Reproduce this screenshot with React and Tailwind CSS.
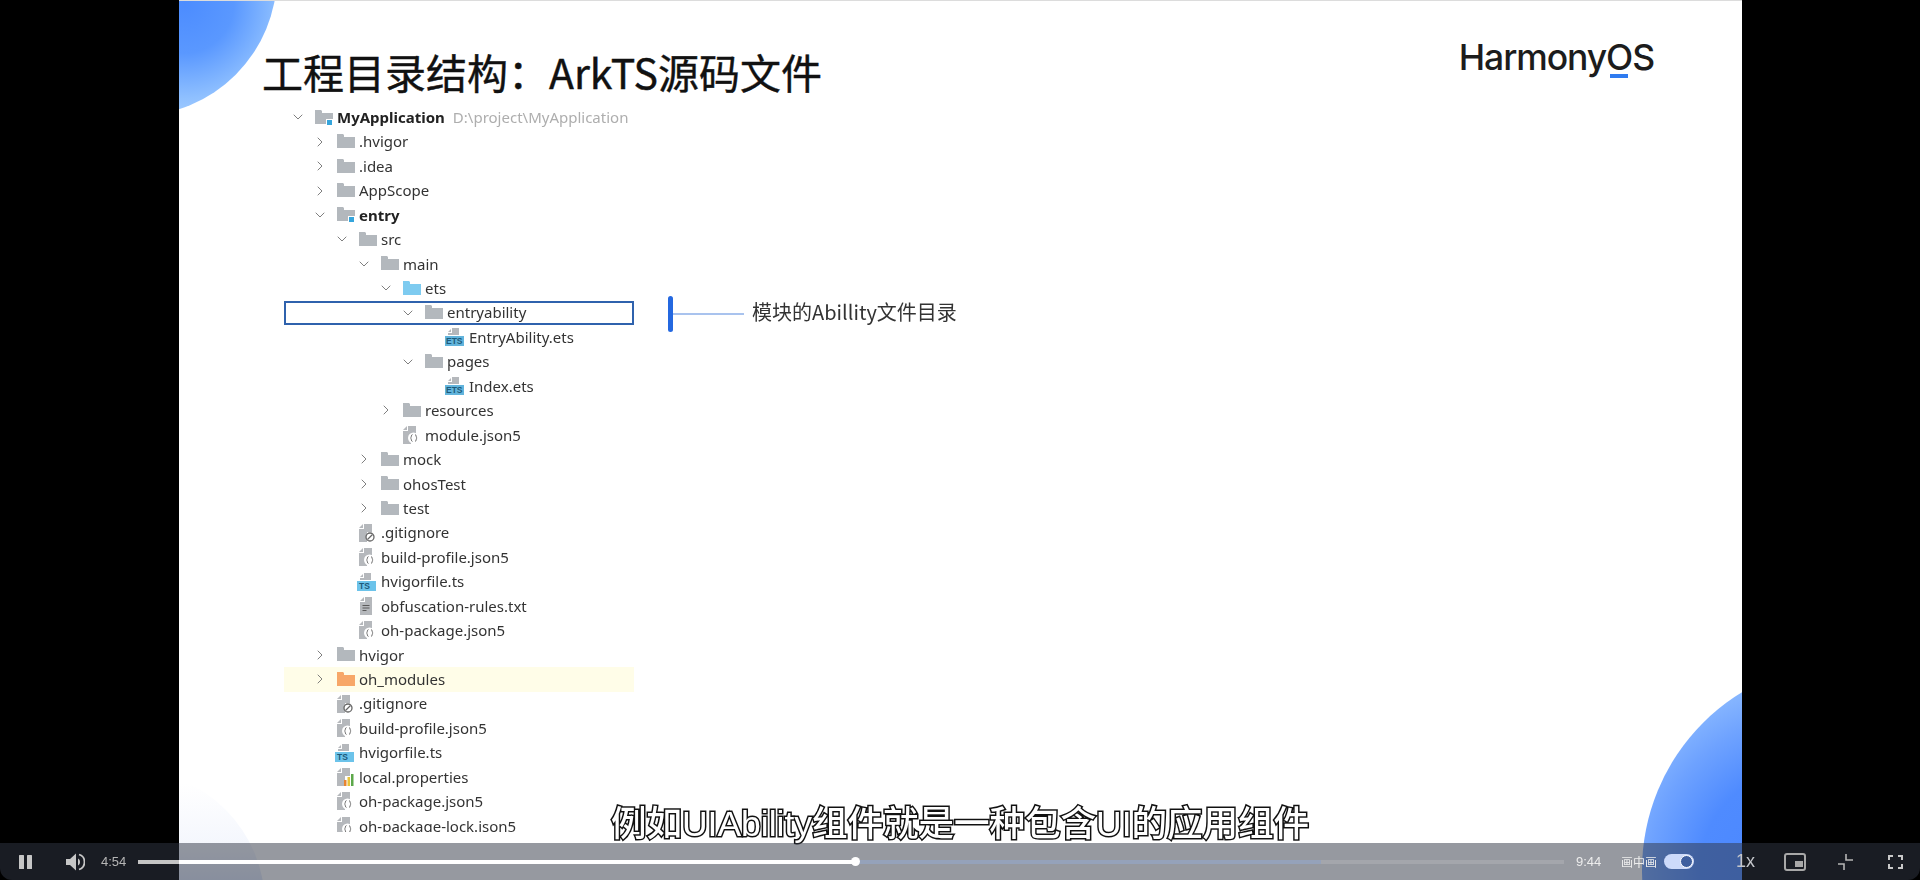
import React from "react";
import { ChevronDown, ChevronRight } from "lucide-react";

const tree = [
  { d: 0, name: "MyApplication", icon: "module", open: true, bold: true, hint: "D:\\project\\MyApplication" },
  { d: 1, name: ".hvigor", icon: "folder", open: false },
  { d: 1, name: ".idea", icon: "folder", open: false },
  { d: 1, name: "AppScope", icon: "folder", open: false },
  { d: 1, name: "entry", icon: "module", open: true, bold: true },
  { d: 2, name: "src", icon: "folder", open: true },
  { d: 3, name: "main", icon: "folder", open: true },
  { d: 4, name: "ets", icon: "blue", open: true },
  { d: 5, name: "entryability", icon: "folder", open: true, boxed: true },
  { d: 6, name: "EntryAbility.ets", icon: "ets" },
  { d: 5, name: "pages", icon: "folder", open: true },
  { d: 6, name: "Index.ets", icon: "ets" },
  { d: 4, name: "resources", icon: "folder", open: false },
  { d: 4, name: "module.json5", icon: "json" },
  { d: 3, name: "mock", icon: "folder", open: false },
  { d: 3, name: "ohosTest", icon: "folder", open: false },
  { d: 3, name: "test", icon: "folder", open: false },
  { d: 2, name: ".gitignore", icon: "git" },
  { d: 2, name: "build-profile.json5", icon: "json" },
  { d: 2, name: "hvigorfile.ts", icon: "ts" },
  { d: 2, name: "obfuscation-rules.txt", icon: "txt" },
  { d: 2, name: "oh-package.json5", icon: "json" },
  { d: 1, name: "hvigor", icon: "folder", open: false },
  { d: 1, name: "oh_modules", icon: "orange", open: false, marked: true },
  { d: 1, name: ".gitignore", icon: "git" },
  { d: 1, name: "build-profile.json5", icon: "json" },
  { d: 1, name: "hvigorfile.ts", icon: "ts" },
  { d: 1, name: "local.properties", icon: "props" },
  { d: 1, name: "oh-package.json5", icon: "json" },
  { d: 1, name: "oh-package-lock.json5", icon: "json" },
];

const Folder = ({ color, badge }) => (
  <svg width="18" height="17" viewBox="0 0 18 17">
    <path d="M0 1h6l1 1v2h11v11H0z" fill={color} />
    {badge && <rect x="11.500" y="10.500" width="6" height="6" fill="#35a5dc" stroke="#fff" />}
  </svg>
);

// grey sheet with folded corner, shared by the plain file icons
const Sheet = () => (
  <>
    <path d="M0 4l4-4v4z" fill="#b5b8bc" />
    <path d="M5 0h8v8H8v10H0V5h5z" fill="#b5b8bc" />
  </>
);

const FileIcon = ({ type }) => {
  if (type === "ets" || type === "ts") {
    return (
      <svg width="19" height="18" viewBox="0 0 19 18">
        <path d="M3 4l3-3v3z" fill="#b5b8bc" />
        <path d="M7 0h7v7H3V5h4z" fill="#b5b8bc" />
        <rect y="8" width="19" height="10" fill={type === "ts" ? "#6cc3ea" : "#62b4dc"} />
        <text x={type === "ts" ? 2 : 1} y="16" fontSize="8.500" fontWeight="700" fill="#1d5a7a" fontFamily="Liberation Sans, sans-serif">
          {type.toUpperCase()}
        </text>
      </svg>
    );
  }
  return (
    <svg width="17" height="18" viewBox="0 0 17 18">
      {type !== "txt" && <Sheet />}
      {type === "json" && (
        <>
          <circle cx="10.500" cy="12" r="5.500" fill="#fff" />
          <path d="M9.500 8.500c-1.500 0-.8 3-2 3.500 1.200.5.500 3.500 2 3.500M12 8.500c1.500 0 .8 3 2 3.500-1.200.5-.5 3.500-2 3.500" stroke="#777" fill="none" />
        </>
      )}
      {type === "git" && (
        <>
          <circle cx="11" cy="13" r="4" fill="#fff" stroke="#666" strokeWidth="1.300" />
          <path d="M8.500 15.500l5-5" stroke="#666" strokeWidth="1.300" />
        </>
      )}
      {type === "txt" && (
        <>
          <path d="M1 4l4-4v4z" fill="#b5b8bc" />
          <path d="M6 0h7v18H1V5h5z" fill="#b5b8bc" />
          <path d="M3.500 8.500h7M3.500 11h7M3.500 13.500h4" stroke="#5a5a5a" />
        </>
      )}
      {type === "props" && (
        <>
          <rect x="7" y="12" width="2.500" height="6" fill="#e8842f" />
          <rect x="10.500" y="9" width="2.500" height="9" fill="#e8c23a" />
          <rect x="14" y="6" width="2.500" height="12" fill="#5da84a" />
        </>
      )}
    </svg>
  );
};

const RowIcon = ({ icon }) => {
  if (icon === "folder") return <Folder color="#b3b8bd" />;
  if (icon === "blue") return <Folder color="#7ecbf0" />;
  if (icon === "orange") return <Folder color="#f7a768" />;
  if (icon === "module") return <Folder color="#b3b8bd" badge />;
  return <FileIcon type={icon} />;
};

const Row = ({ row }) => {
  let cls = "flex items-center h-[24.45px] text-[15px] text-[#333] whitespace-nowrap";
  if (row.boxed) cls += " outline-2 -outline-offset-2 outline-[#2f62ad]";
  if (row.marked) cls += " bg-[#fffde8]";
  return (
    <div className={cls} style={{ paddingLeft: 6 + row.d * 22 }}>
      <span className="w-4 mr-[9px] flex justify-center text-[#6b6b6b]">
        {row.open === true && <ChevronDown size={16} strokeWidth={1.3} />}
        {row.open === false && <ChevronRight size={16} strokeWidth={1.3} />}
      </span>
      <span className={row.icon === "ets" || row.icon === "ts" ? "w-[22px] -ml-[2px] mr-[2px] flex items-center" : "w-[22px] flex items-center"}>
        <RowIcon icon={row.icon} />
      </span>
      <span className={row.bold ? "font-bold text-[#222]" : ""}>{row.name}</span>
      {row.hint && <span className="ml-[8px] text-[#aeaeae]">{row.hint}</span>}
    </div>
  );
};

const Controls = () => (
  <div className="absolute left-0 right-0 bottom-0 h-[37px] flex items-center pl-[19px] pr-[17px] rounded-b-xl bg-[rgba(49,55,69,0.51)]">
    <svg width="13" height="14" viewBox="0 0 13 14" fill="#c6c6c6">
      <rect width="5" height="14" rx="0.5" />
      <rect x="8" width="5" height="14" rx="0.5" />
    </svg>
    <svg className="ml-[34px]" width="19" height="18" viewBox="0 0 19 18" fill="#c6c6c6">
      <path d="M0 6h4l6-5.500v17L4 12H0z" />
      <path d="M12 5.500c1.500.8 2 2.100 2 3.500s-.5 2.700-2 3.500z" />
      <path d="M13 1.500c3.500 1 5.500 4 5.500 7.500s-2 6.500-5.500 7.500" fill="none" stroke="#c6c6c6" strokeWidth="1.800" />
    </svg>
    <span className="ml-[16px] w-[25px] text-[13px] text-[#b5b5b5] font-['Liberation_Sans',sans-serif]">4:54</span>
    <div className="ml-[12px] flex-1 flex h-1 relative">
      <div className="w-[718px] bg-[linear-gradient(90deg,#c4c4c4_41px,#fff_41px)]" />
      <div className="w-[465px] bg-[#95a2ba]" />
      <div className="flex-1 bg-[#a4a6ac]" />
      <div className="absolute left-[713px] -top-[2.500px] w-[9px] h-[9px] rounded-full bg-white" />
    </div>
    <span className="ml-[12px] w-[25px] text-[13px] text-[#ededed] font-['Liberation_Sans',sans-serif]">9:44</span>
    <span className="ml-[20px] text-[12px] leading-none text-[#eeeeee] font-['Noto_Sans_CJK_SC',sans-serif]">画中画</span>
    <div className="ml-[7px] w-[30px] h-[15px] rounded-full bg-[#cddafa] flex items-center justify-end pr-[1px]">
      <div className="w-[13px] h-[13px] rounded-full bg-[#3f5f9f] border border-white" />
    </div>
    <span className="ml-[42px] w-[20px] text-[18px] text-[#c4c6cb] font-['Liberation_Sans',sans-serif]">1x</span>
    <svg className="ml-[28px]" width="22" height="18" viewBox="0 0 22 18">
      <rect x="1" y="1" width="20" height="16" rx="2" fill="none" stroke="#a8a8a8" strokeWidth="2" />
      <rect x="11" y="8" width="8" height="6" fill="#a8a8a8" />
    </svg>
    <svg className="ml-[32px]" width="15" height="16" viewBox="0 0 15 16" fill="none" stroke="#b5b5b5" strokeWidth="1.600">
      <path d="M8 0v6h7M0 10h6v6" />
    </svg>
    <svg className="ml-[35px]" width="15" height="14" viewBox="0 0 15 14" fill="none" stroke="#c8c8c8" strokeWidth="2">
      <path d="M1 5V1h4M10 1h4v4M14 9v4h-4M5 13H1V9" />
    </svg>
  </div>
);

export default function App() {
  return (
    <div className="relative w-full h-[880px] overflow-hidden bg-black font-['Noto_Sans','Noto_Sans_CJK_SC',sans-serif]">
      <div className="relative ml-[179px] mr-[178px] h-[880px] bg-white overflow-hidden border-t border-[#dcdcdc]">
        {/* decorative circles of the slide */}
        <div className="absolute -left-[184px] -top-[167px] w-[282px] h-[282px] rounded-full bg-[radial-gradient(circle_at_67%_60%,#4c8cff_0px,#5a98ff_50px,#8fc0ff_95px,#a8d0ff_120px)]" />
        <div className="absolute left-[1463px] top-[661px] w-[416px] h-[416px] rounded-full bg-[radial-gradient(circle_at_38%_50%,#4a86ff_0px,#4f8bff_100px,#6ea2ff_150px,#8dbbff_195px)]" />
        <div className="absolute -left-[184px] top-[769px] w-[270px] h-[270px] rounded-full bg-[linear-gradient(180deg,#ffffff_5%,#f3f6fd_30%,#d5e0f7_50%)]" />

        <div className="relative flex justify-between pl-[83px] pr-[88px]">
          <h1 className="mt-[44px] text-[41px] leading-[52px] font-normal text-[#111] [-webkit-text-stroke:0.4px_#111] font-['Noto_Sans_CJK_SC',sans-serif]">
            工程目录结构：ArkTS源码文件
          </h1>
          <div className="mt-[35px] relative">
            <span className="font-['Inter',sans-serif] text-[35.500px] leading-[44px] font-medium tracking-[-1.100px] text-[#1c1c1c]">
              HarmonyOS
            </span>
            <div className="absolute left-[151px] top-[38px] w-[18px] h-[4px] bg-[#2f7bf0]" />
          </div>
        </div>

        <div className="relative flex mt-[8px] ml-[105px] blur-[0.3px]">
          <div className="w-[350px] h-[727px] overflow-hidden">
            {tree.map((row, i) => (
              <Row key={i} row={row} />
            ))}
          </div>
          <div className="ml-[34px] mt-[191px] h-[36px] flex items-center">
            <div className="w-[5px] h-[36px] rounded-sm bg-[#2468e0]" />
            <div className="w-[71px] h-[2px] bg-[#a9c3ee]" />
            <span className="ml-[8px] -mt-[5px] text-[20px] text-[#333] font-['Noto_Sans_CJK_SC',sans-serif]">模块的Abillity文件目录</span>
          </div>
        </div>
      </div>

      <div className="absolute left-0 right-0 bottom-[34px] text-center text-[35.500px] leading-[44px] text-white font-['Liberation_Sans','Noto_Sans_CJK_SC',sans-serif] font-medium [paint-order:stroke_fill] [-webkit-text-stroke:3px_#111]">
        例如UIAbility组件就是一种包含UI的应用组件
      </div>
      <Controls />
    </div>
  );
}
